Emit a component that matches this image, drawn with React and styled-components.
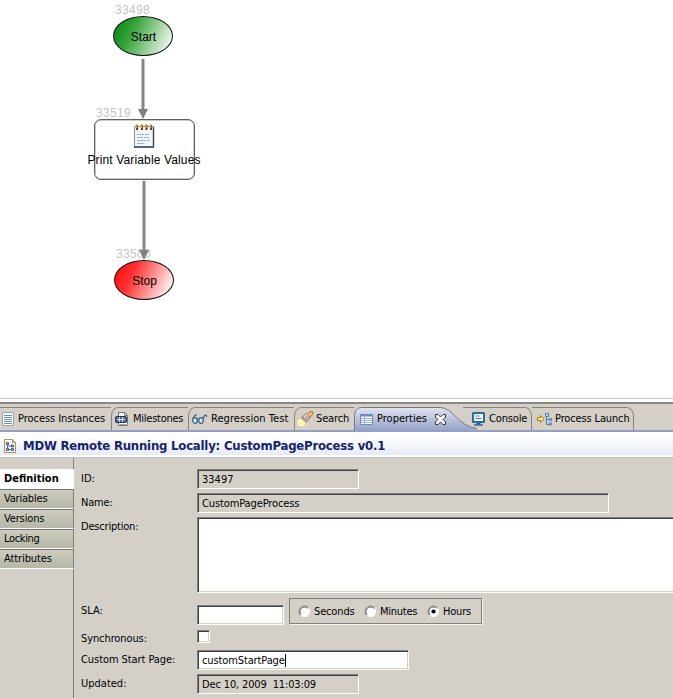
import React from "react";
import styled, { createGlobalStyle, css } from "styled-components";

const Global = createGlobalStyle`
  *{box-sizing:border-box}
  body{margin:0;background:#fff;overflow:hidden}
`;
const ui = '"DejaVu Sans Condensed","DejaVu Sans",sans-serif';

const Page = styled.div`
  width:673px;height:698px;display:flex;flex-direction:column;background:#fff;
  font:11px/14px ${ui};font-stretch:condensed;color:#000;overflow:hidden;
`;
const Label = styled.span`
  white-space:pre;letter-spacing:${p => p.$ls || 0}px;
`;

/* process diagram */
const Canvas = styled.div`position:relative;height:398px;flex:none;`;
const Node = styled.div`
  position:absolute;left:${p => p.$x}px;top:${p => p.$y}px;
  display:flex;align-items:center;justify-content:center;
  font:12px/14px "Liberation Sans",Arial,sans-serif;white-space:pre;
`;
const Terminal = styled(Node)`
  width:60px;height:40px;border:1px solid #101010;border-radius:50%;padding:2px 0 0 1px;
  background:linear-gradient(${p => p.$fill});
`;
const Activity = styled(Node)`
  width:101px;height:61px;border:1px solid #606060;border-radius:7px;
  box-shadow:inset 0 0 0 .5px #999;flex-direction:column;justify-content:flex-start;
  padding:3px 1px 0 0;letter-spacing:.14px;
  svg{flex:none;margin-bottom:5px}
`;
const NodeId = styled(Node)`color:#c4c4c4;letter-spacing:.3px;`;
const Arrow = styled.svg`position:absolute;left:${p => p.$x}px;top:${p => p.$y}px;`;

/* view folder */
const Sash = styled.div`height:6px;flex:none;border-top:1px solid #c9c9c9;border-bottom:2px solid #8a8883;background:#fff;`;
const TabBar = styled.div`
  height:28px;flex:none;display:flex;padding-top:3px;background:#d4d0c8;
  border-bottom:2px solid #939fc6;
`;
const Tab = styled.div`
  width:${p => p.$w}px;flex:none;height:23px;display:flex;align-items:center;
  padding-left:${p => p.$pad}px;gap:${p => p.$gap}px;border-top:1px solid #85827b;
  ${p => p.$edge === "left" && css`border-left:1px solid #85827b;border-top-left-radius:7px 9px;`}
  ${p => p.$edge === "right" && css`border-right:1px solid #85827b;border-top-right-radius:7px 9px;`}
  svg{flex:none}
`;
const ActiveTab = styled.div`
  position:relative;width:109px;flex:none;height:24px;display:flex;align-items:center;
  padding-left:6px;gap:4px;
  ${Label}{position:relative;margin-right:4px}
  > svg:not(:first-child){position:relative;flex:none}
`;
const TabShape = styled.svg`position:absolute;left:0;top:0;`;
const TitleBar = styled.div`
  height:26px;flex:none;display:flex;align-items:center;padding:2px 0 0 4px;gap:7px;
  background:linear-gradient(#fff,#fff 15%,#e7ebf5 90%,#fff 94%);border-bottom:1px solid #bfc0c3;
  color:#15246b;font:bold 13px/16px ${ui};font-stretch:condensed;
`;

/* properties body */
const Body = styled.div`flex:1;display:flex;background:#d4d0c8;min-height:0;`;
const Side = styled.div`
  width:74px;flex:none;display:flex;flex-direction:column;
  &::before{content:"";height:11px;border-right:1px solid #808080}
  &::after{content:"";flex:1;border-right:1px solid #808080}
`;
const SideTab = styled.div`
  height:20px;flex:none;padding:${p => (p.$active ? 3 : 2)}px 0 0 4px;
  ${p => p.$active ? css`background:#fff;font-weight:bold;` : css`
    background:linear-gradient(#ceccbe,#b5b7a8);border-top:1px solid #77776f;
    border-bottom:1px solid #fff;border-right:1px solid #808080;`}
`;
const Form = styled.div`flex:1;padding:11px 0 0 7px;min-width:0;`;
const Row = styled.div`
  display:grid;grid-template-columns:116px 1fr;height:${p => p.$h}px;margin-bottom:${p => p.$gap}px;
  align-items:start;
  > ${Label}{padding-top:${p => p.$top ?? 3}px}
`;
const sunken = css`
  border:1px solid;border-color:#808080 #fff #fff #808080;
  box-shadow:inset 1px 1px #404040,inset -1px -1px ${p => p.$ro ? "transparent" : "#d4d0c8"};
`;
const Field = styled.div`
  width:${p => p.$w}px;height:${p => p.$h || 20}px;display:flex;align-items:center;padding:1px 0 0 4px;
  background:${p => p.$ro ? "#d4d0c8" : "#fff"};${sunken}
`;
const Caret = styled.i`width:1px;height:13px;background:#000;`;
const SlaControls = styled.div`display:flex;gap:5px;align-items:flex-start;${Field}{margin-top:7px}`;
const RadioGroup = styled.div`
  width:193px;height:26px;border:1px solid #808080;box-shadow:1px 1px #f4f2ee;
  display:grid;grid-template-columns:66px 63px 1fr;padding-left:8px;align-items:center;
`;
const Choice = styled.div`display:flex;align-items:center;gap:3px;${Label}{position:relative;top:1px}`;
const Checkbox = styled.div`width:13px;height:13px;background:#fff;${sunken}`;

const Radio = ({ on }) => (
  <svg width="13" height="13" viewBox="0 0 13 13">
    <circle cx="6.5" cy="6.5" r="5.500" fill="#fff" />
    <path d="M2.600 10.400A5.500 5.500 0 0 1 10.400 2.600" fill="none" stroke="#808080" />
    <path d="M3.300 9.700A4.500 4.500 0 0 1 9.700 3.300" fill="none" stroke="#404040" strokeWidth=".8" />
    {on && <circle cx="6.5" cy="6.5" r="2.1" />}
  </svg>
);
const Notepad = () => (
  <svg width="22" height="25" viewBox="0 0 22 25">
    <path d="M1.5 3.5H20.5V24H1.5z" fill="#f3f6fa" stroke="#8593a6" />
    <path d="M20.5 4V24H1" fill="none" stroke="#35475d" strokeWidth="1.4" />
    <path d="M4 11.5h7m1 0h4M4 14.5h6m1 0h5M4 17.5h9m1 0h3M4 20.5h7" stroke="#a4b0c2" />
    <path d="M4 2v5M9 2v5M13.500 2v5M18 2v5" stroke="#554320" strokeWidth="2" />
    <path d="M3.500 1v4M8.500 1v4M13 1v4M17.500 1v4" stroke="#d3a62f" strokeWidth="1.500" />
  </svg>
);
const ListIcon = () => (
  <svg width="12" height="14" viewBox="0 0 12 14">
    <path d="M.5.5h11v13H.5z" fill="#fff" stroke="#9ba4ae" />
    <path d="M2 3.500h8M2 5.500h8M2 7.500h8M2 9.500h8M2 11.500h8" stroke="#668cc5" />
  </svg>
);
const MilestoneIcon = () => (
  <svg width="14" height="14" viewBox="0 0 14 14">
    <path d="M3.500.5h6l3 3v10h-9z" fill="#fff" stroke="#777" />
    <path d="M9.500.5v3h3" fill="none" stroke="#777" />
    <rect x=".5" y="4.500" width="11" height="6" rx="1" fill="#55688b" stroke="#263449" />
    <path d="M2 7.500h8M4.500 5v5M7.500 5v5" stroke="#dce5f1" />
    <path d="M5 12.500h6" stroke="#92a3bb" />
  </svg>
);
const GlassesIcon = () => (
  <svg width="16" height="12" viewBox="0 0 16 12" fill="none" stroke="#355f7d" strokeWidth="1.200">
    <ellipse cx="3" cy="7.500" rx="2.300" ry="2.800" fill="#d3e7ef" />
    <ellipse cx="9" cy="7.500" rx="2.300" ry="2.800" fill="#d3e7ef" />
    <path d="M5.300 7q.8-1 1.500 0M1 6Q2 2 5 1.500M11 6q1.200-4 2.700-4 1.300 0 .8 2" />
  </svg>
);
const SearchIcon = () => (
  <svg width="17" height="16" viewBox="0 0 17 16">
    <path d="M0 10l4-3 5 5-2 3H1z" fill="#fff6b8" />
    <path d="M5 6l5-4 4 4-5 5z" fill="#b8aeb2" stroke="#8c8080" />
    <path d="M10 3l2.500-2 3-.5.3 3L13 6z" fill="#f3bd6b" stroke="#b77a35" />
    <path d="M4 6.500l5.500 5" stroke="#c79a5c" strokeWidth="1.500" />
    <path d="M7 6l4-3" stroke="#eee" />
  </svg>
);
const TableIcon = () => (
  <svg width="13" height="11" viewBox="0 0 13 11">
    <path d="M.5.5h12v10H.5z" fill="#fff" stroke="#728cbc" />
    <path d="M1 1.500h11" stroke="#6684b9" strokeWidth="2" />
    <path d="M1 4.500h11M1 6.500h11M1 8.500h11M4.500 1v9" stroke="#9db0d3" />
  </svg>
);
const CloseIcon = () => (
  <svg width="11" height="11" viewBox="0 0 11 11">
    <path d="M.5.5h2.500L5.500 3 8 .5h2.500V3L8 5.500 10.500 8v2.500H8L5.500 8 3 10.500H.5V8L3 5.500.5 3z" fill="#fff" stroke="#333" />
  </svg>
);
const ConsoleIcon = () => (
  <svg width="14" height="14" viewBox="0 0 14 14">
    <rect x="1" y="1" width="11" height="9" rx=".5" fill="#f4faff" stroke="#2968ab" strokeWidth="2" />
    <path d="M3.500 4h4M3.500 6.500h6" stroke="#477aab" />
    <path d="M4.500 11.500h4M2 13h9" stroke="#396493" strokeWidth="1.500" />
  </svg>
);
const LaunchIcon = () => (
  <svg width="16" height="13" viewBox="0 0 16 13">
    <path d="M.5 4.500h3v-2L7.300 6 3.500 9.500v-2h-3z" fill="#ffe48c" stroke="#ad7b1d" />
    <path d="M9.500 2v9.500h4M9.500 6.500h4" fill="none" stroke="#527db5" />
    <path d="M8.500.5h3v3h-3zM12.500 5.500h2v2h-2zM12.500 10h2v2h-2z" fill="#bcd0ec" stroke="#527db5" />
  </svg>
);
const ProcessIcon = () => (
  <svg width="12" height="14" viewBox="0 0 12 14">
    <path d="M.5.5h8l3 3v10H.5z" fill="#fffdf0" stroke="#a69557" />
    <path d="M8.500.5v3h3" fill="#f0c45c" stroke="#a69557" />
    <path d="M3.500 4v6.500H8M4 7h4V5.500" fill="none" stroke="#4263a2" />
    <path d="M2.500 3.500h2v2h-2zM7.500 6h2v2h-2zM7.500 9.500h2v2h-2zM2.500 9.500h2v2h-2z" fill="#cbd9f2" stroke="#38589a" />
  </svg>
);

const Connector = ({ x, y, h }) => (
  <Arrow $x={x} $y={y} width="11" height={h} viewBox={`0 0 11 ${h}`}>
    <path d={`M5 0V${h - 8}`} stroke="#858585" strokeWidth="3" />
    <path d={`M0 ${h - 10}h10L5 ${h}z`} fill="#808080" />
  </Arrow>
);

export default function App() {
  return (
    <Page>
      <Global />
      <Canvas>
        <NodeId $x={115} $y={3}>33498</NodeId>
        <NodeId $x={96} $y={106}>33519</NodeId>
        <NodeId $x={116} $y={247}>33500</NodeId>
        <Connector x={138} y={59} h={60} />
        <Connector x={139} y={181} h={79} />
        <Terminal $x={113} $y={16} $fill="115deg,#118a18 8%,#36a43a 32%,#e5f2e5 88%">Start</Terminal>
        <Activity $x={94} $y={119}><Notepad />Print Variable Values</Activity>
        <Terminal $x={114} $y={260} $fill="115deg,#ff1414 10%,#ff3030 30%,#ffeaea 88%">Stop</Terminal>
      </Canvas>
      <Sash />
      <TabBar>
        <Tab $w={111} $pad={2} $gap={4}><ListIcon /><Label $ls={-0.05}>Process Instances</Label></Tab>
        <Tab $w={77} $pad={3} $gap={4} $edge="left"><MilestoneIcon /><Label $ls={-0.25}>Milestones</Label></Tab>
        <Tab $w={106} $pad={3} $gap={3} $edge="left"><GlassesIcon /><Label $ls={0.06}>Regression Test</Label></Tab>
        <Tab $w={60} $pad={2} $gap={2} $edge="left"><SearchIcon /><Label $ls={-0.15}>Search</Label></Tab>
        <ActiveTab>
          <TabShape width="124" height="24" viewBox="0 0 124 24">
            <defs>
              <linearGradient id="tab" x2="0" y2="1"><stop stopColor="#e0e4f0" /><stop offset="1" stopColor="#94a1c8" /></linearGradient>
            </defs>
            <path d="M.5 24V8Q1 1 7 .5H86C99 .5 105 20 123 22V24z" fill="url(#tab)" />
            <path d="M.5 24V8Q1 1 7 .5H86C99 .5 105 20 123 21.500" fill="none" stroke="#77777c" />
          </TabShape>
          <TableIcon /><Label>Properties</Label><CloseIcon />
        </ActiveTab>
        <Tab $w={69} $pad={9} $gap={3} $edge="right"><ConsoleIcon /><Label $ls={-0.15}>Console</Label></Tab>
        <Tab $w={102} $pad={5} $gap={2} $edge="right"><LaunchIcon /><Label $ls={-0.14}>Process Launch</Label></Tab>
      </TabBar>
      <TitleBar><ProcessIcon /><Label $ls={-0.2}>MDW Remote Running Locally: CustomPageProcess v0.1</Label></TitleBar>
      <Body>
        <Side>
          <SideTab $active><Label>Definition</Label></SideTab>
          <SideTab><Label $ls={-0.2}>Variables</Label></SideTab>
          <SideTab><Label $ls={-0.15}>Versions</Label></SideTab>
          <SideTab><Label $ls={-0.35}>Locking</Label></SideTab>
          <SideTab><Label $ls={-0.1}>Attributes</Label></SideTab>
        </Side>
        <Form>
          <Row $h={20} $gap={4}><Label>ID:</Label><Field $w={162} $ro><Label>33497</Label></Field></Row>
          <Row $h={20} $gap={4}><Label $ls={-0.2}>Name:</Label><Field $w={412} $ro><Label $ls={-0.12}>CustomPageProcess</Label></Field></Row>
          <Row $h={76} $gap={5}><Label $ls={-0.2}>Description:</Label><Field $w={500} $h={76} /></Row>
          <Row $h={27} $gap={5} $top={6}>
            <Label>SLA:</Label>
            <SlaControls>
              <Field $w={87} />
              <RadioGroup>
                <Choice><Radio /><Label $ls={-0.15}>Seconds</Label></Choice>
                <Choice><Radio /><Label $ls={-0.25}>Minutes</Label></Choice>
                <Choice><Radio on /><Label $ls={-0.2}>Hours</Label></Choice>
              </RadioGroup>
            </SlaControls>
          </Row>
          <Row $h={14} $gap={6} $top={2}><Label $ls={-0.1}>Synchronous:</Label><Checkbox /></Row>
          <Row $h={20} $gap={4}><Label $ls={-0.07}>Custom Start Page:</Label><Field $w={212}><Label $ls={-0.12}>customStartPage</Label><Caret /></Field></Row>
          <Row $h={20} $gap={4}><Label>Updated:</Label><Field $w={162} $ro><Label $ls={-0.14}>Dec 10, 2009  11:03:09</Label></Field></Row>
        </Form>
      </Body>
    </Page>
  );
}
